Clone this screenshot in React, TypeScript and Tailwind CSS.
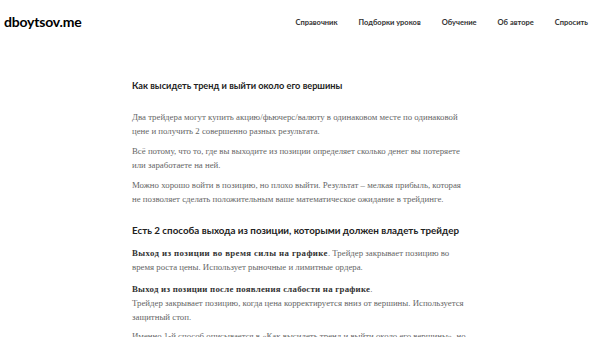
import React from "react";

const nav = ["Справочник", "Подборки уроков", "Обучение", "Об авторе", "Спросить"];

export default function App() {
  return (
    <div className="min-h-[337px] w-[600px] overflow-hidden bg-white">
      {/* header */}
      <header className="flex h-[42px] items-center justify-between pl-[4px] pr-[12px] font-['Lato',sans-serif]">
        <a className="text-[14px] font-bold tracking-[-0.2px] text-black">dboytsov.me</a>
        <nav className="mt-[4px] flex gap-[21px] text-[7.5px] font-bold text-[#333]">
          {nav.map((item) => (
            <a key={item}>{item}</a>
          ))}
        </nav>
      </header>

      {/* article */}
      <article className="mx-auto w-[336px] pt-[37px] font-['Liberation_Serif',serif] text-[8.8px] leading-[14px] text-[#666]">
        <h1 className="mb-[17px] font-['Lato',sans-serif] text-[9.2px] font-bold leading-[14px] text-[#222]">
          Как высидеть тренд и выйти около его вершины
        </h1>
        <p className="mb-[6px]">
          Два трейдера могут купить акцию/фьючерс/валюту в одинаковом месте по одинаковой цене и получить 2 совершенно разных результата.
        </p>
        <p className="mb-[6px]">
          Всё потому, что то, где вы выходите из позиции определяет сколько денег вы потеряете или заработаете на ней.
        </p>
        <p className="mb-[6px]">
          Можно хорошо войти в позицию, но плохо выйти. Результат – мелкая прибыль, которая не позволяет сделать положительным ваше математическое ожидание в трейдинге.
        </p>
        <h2 className="mb-[9px] mt-[17px] font-['Lato',sans-serif] text-[9.8px] font-bold leading-[14px] text-[#222]">
          Есть 2 способа выхода из позиции, которыми должен владеть трейдер
        </h2>
        <p className="mb-[8px]">
          <b className="tracking-[0.4px] text-[#333]">Выход из позиции во время силы на графике</b>. Трейдер закрывает позицию во время роста цены. Использует рыночные и лимитные ордера.
        </p>
        <p className="mb-[5px]">
          <b className="tracking-[0.25px] text-[#333]">Выход из позиции после появления слабости на графике</b>.
          <br />
          Трейдер закрывает позицию, когда цена корректируется вниз от вершины. Используется защитный стоп.
        </p>
        <p>
          Именно 1-й способ описывается в «Как высидеть тренд и выйти около его вершины», но
        </p>
      </article>
    </div>
  );
}
